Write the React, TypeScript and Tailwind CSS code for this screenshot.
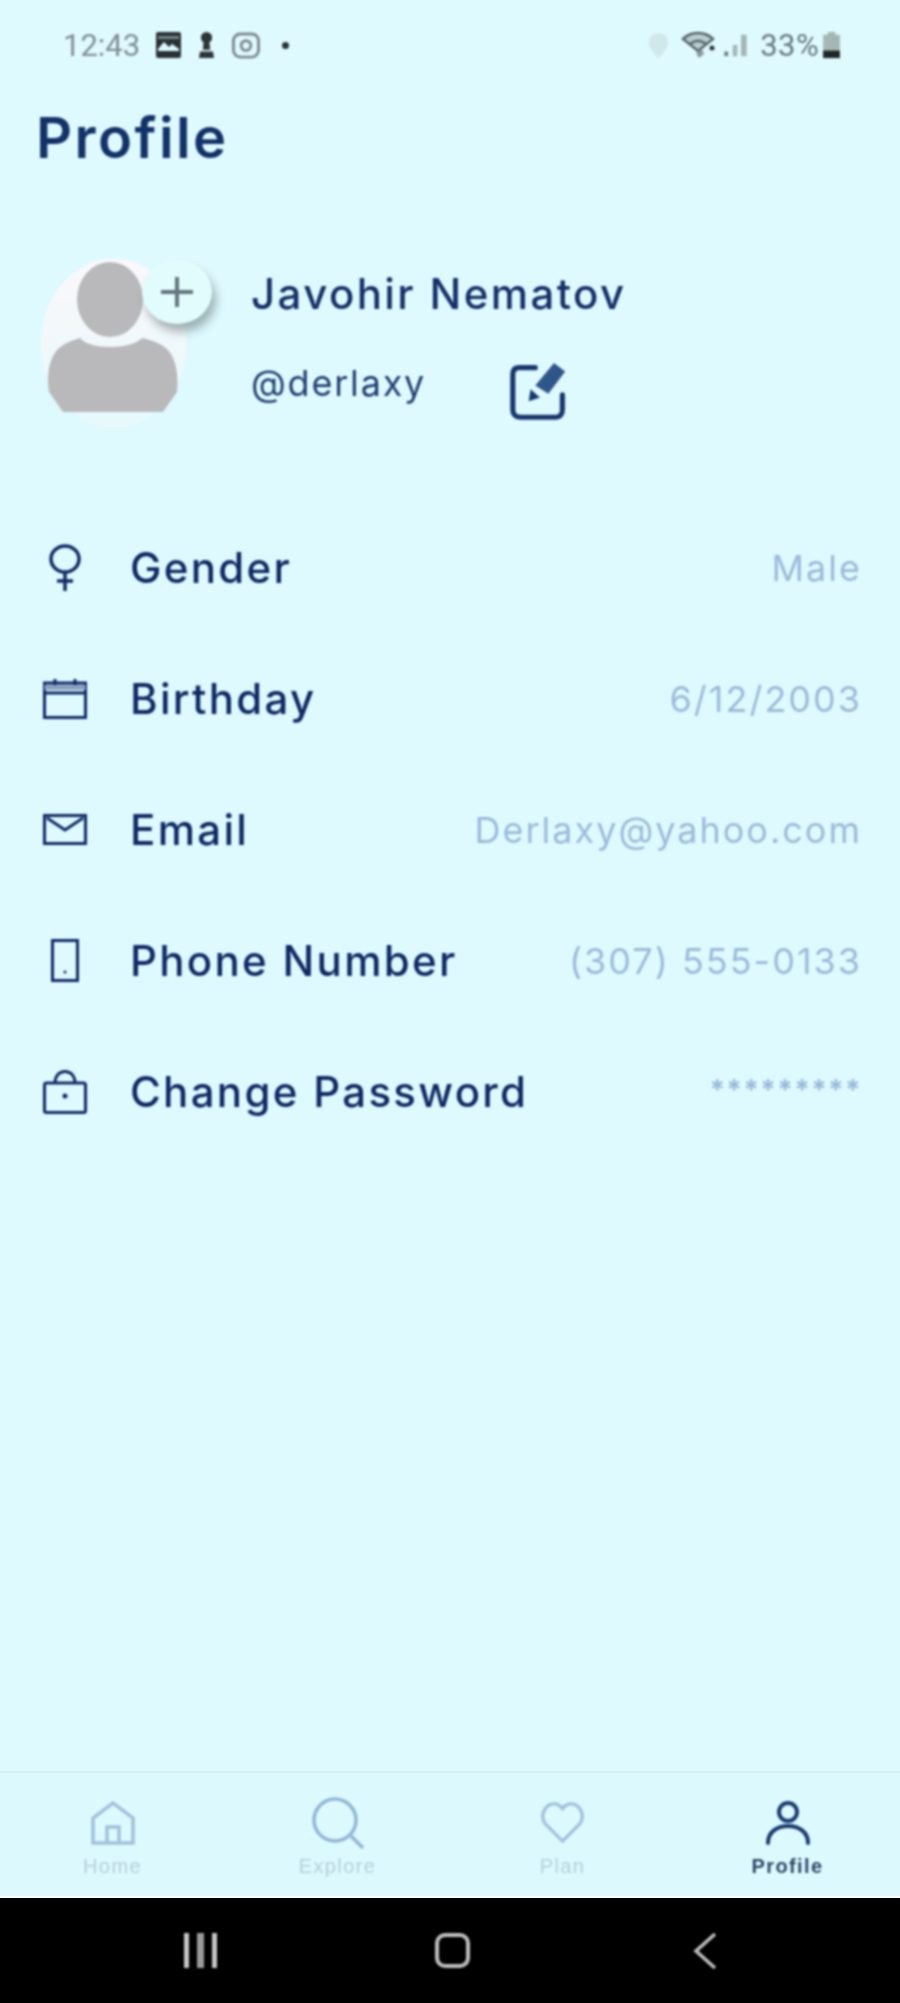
import type { ReactNode } from 'react';

const GenderIcon = () => (
  <svg width="32" height="47" viewBox="0 0 32 47" fill="none" stroke="#102a66" strokeWidth="3.5">
    <ellipse cx="16" cy="15" rx="14" ry="13" />
    <path d="M16 28v19M8 37h16" />
  </svg>
);

const CalendarIcon = () => (
  <svg width="44" height="40" viewBox="0 0 44 40" fill="none" stroke="#102a66" strokeWidth="3">
    <rect x="1.5" y="4" width="41" height="34.5" />
    <path d="M1.5 14h41" />
    <path d="M1.5 8.5h41" stroke="#8c9fc0" strokeWidth="5" />
    <path d="M12 0v6M32 0v6" />
  </svg>
);

const MailIcon = () => (
  <svg width="44" height="31" viewBox="0 0 44 31" fill="none" stroke="#102a66" strokeWidth="3">
    <rect x="1.5" y="1.5" width="41" height="28" />
    <path d="M4 4l18 12L40 4" />
  </svg>
);

const PhoneIcon = () => (
  <svg width="28" height="43" viewBox="0 0 28 43" fill="none" stroke="#102a66" strokeWidth="3">
    <rect x="1.5" y="1.5" width="25" height="40" />
    <circle cx="14" cy="33" r="1.5" fill="#102a66" stroke="none" />
  </svg>
);

const LockIcon = () => (
  <svg width="44" height="44" viewBox="0 0 44 44" fill="none" stroke="#102a66" strokeWidth="3">
    <rect x="1.5" y="13" width="41" height="29.5" rx="2" />
    <path d="M12 13c0-7 4-11.500 10-11.500S32 6 32 13" />
    <circle cx="22" cy="26" r="2.500" fill="#102a66" stroke="none" />
  </svg>
);

const Row = ({ icon, label, value }: { icon: ReactNode; label: string; value: ReactNode }) => (
  <div className="flex h-[131px] items-center pl-[32px] pr-[38px]">
    <div className="flex w-[66px] justify-center">{icon}</div>
    <span className="ml-[32px] text-[42px] font-medium tracking-[2.3px] text-[#0f2864]">{label}</span>
    <span className="ml-auto text-[36px] tracking-[2px] text-[#9bb9da]">{value}</span>
  </div>
);

const NavItem = ({ icon, label, active }: { icon: ReactNode; label: string; active?: boolean }) => (
  <div className="flex flex-col items-center">
    <div className="flex h-[56px] items-center">{icon}</div>
    <span
      className={
        active
          ? "font-['Liberation_Sans',sans-serif] text-[20px] font-bold tracking-[1.4px] text-[#2f4568]"
          : "font-['Liberation_Sans',sans-serif] text-[20px] tracking-[1.4px] text-[#b6ced9]"
      }
    >
      {label}
    </span>
  </div>
);

export default function App() {
  return (
    <div className="flex h-[2003px] w-[900px] flex-col overflow-hidden bg-[#dffaff] font-['Inter',sans-serif]">
      {/* status bar */}
      <div className="flex h-[72px] items-center pl-[63px] pr-[59px] pt-[18px] font-['Roboto',sans-serif] text-[#7f8f93] blur-[0.8px]">
        <span className="text-[31px] leading-none">12:43</span>
        <svg className="ml-[16px]" width="25" height="26" viewBox="0 0 25 26">
          <rect x="0" y="0" width="25" height="26" rx="2" fill="#2a3236" />
          <path d="M2 17l6-7 5 5 3-3 7 5v2H2z" fill="#dffaff" />
          <rect x="2" y="4" width="21" height="3" fill="#dffaff" opacity="0.4" />
        </svg>
        <svg className="ml-[17px]" width="17" height="28" viewBox="0 0 18 30" fill="#2c3437">
          <circle cx="9" cy="7" r="6" />
          <path d="M6 11h6l1 9H5zM2 22h14l1 7H1z" />
        </svg>
        <svg className="ml-[16px]" width="30" height="27" viewBox="0 0 30 28" fill="none" stroke="#7d8b8f" strokeWidth="3">
          <rect x="2" y="2" width="26" height="24" rx="7" />
          <circle cx="15" cy="14" r="5" />
        </svg>
        <span className="ml-[21px] h-[7px] w-[7px] rounded-full bg-[#2a3236]" />
        <svg className="ml-auto" width="21" height="27" viewBox="0 0 22 28" fill="#cfe8ea">
          <path d="M11 1c6 0 10 4 10 10 0 6-6 12-10 16C7 23 1 17 1 11 1 5 5 1 11 1z" />
        </svg>
        <svg className="ml-[12px]" width="36" height="28" viewBox="0 0 36 28" fill="none">
          <path d="M2 8C10 0 24 0 32 8L17 20z" fill="#b9cbcd" stroke="#55686c" strokeWidth="2.500" />
          <path d="M9 13c5-4 11-4 16 0" stroke="#55686c" strokeWidth="2.500" />
          <path d="M15 22l6-4 2 5-5 4z" fill="#8a9a9c" />
          <circle cx="31" cy="17" r="2.500" fill="#2a3236" />
        </svg>
        <svg className="ml-[6px]" width="25" height="26" viewBox="0 0 26 28" fill="#a3b5b7">
          <rect x="1" y="21" width="4" height="5" fill="#6c7d80" />
          <rect x="10" y="14" width="5" height="12" />
          <rect x="19" y="3" width="6" height="23" />
        </svg>
        <span className="ml-[12px] text-[31px] leading-none tracking-[0.4px] text-[#68797d]">33%</span>
        <svg className="ml-[3px]" width="19" height="28" viewBox="0 0 20 30">
          <path d="M6 1h8v3h5v25H1V4h5z" fill="#a4b7b5" />
          <rect x="1" y="21" width="18" height="8" fill="#1e2628" />
        </svg>
      </div>

      {/* title */}
      <h1 className="ml-[36px] mt-[26px] text-[56px] font-semibold leading-[80px] tracking-[2.4px] text-[#123268] blur-[0.8px]">Profile</h1>

      {/* user block */}
      <div className="ml-[41px] mt-[81px] flex h-[169px] blur-[0.8px]">
        <div className="relative h-[169px] w-[145px] rounded-[50%] bg-gradient-to-b from-[#fbf8fb] to-[#e6f9fc]">
          <svg className="ml-[6px] mt-[3px]" width="131" height="150" viewBox="0 0 131 150" fill="#b9b9bb">
            <ellipse cx="63" cy="37.500" rx="33" ry="37.500" />
            <path d="M16 150L2 130C0 118 0 100 10 88c8-8 18-10 23-12 9 12 51 12 62 0 9 2 23 6 29 16 7 12 7 28 6 38l-14 20z" />
          </svg>
          <div className="absolute left-[101px] top-[1px] flex h-[64px] w-[70px] items-center justify-center rounded-[50%] bg-[#e2fbfd] shadow-[4px_8px_10px_rgba(70,90,90,0.45)]">
            <svg width="32" height="30" viewBox="0 0 32 30" stroke="#61767d" strokeWidth="4">
              <path d="M16 0v30M0 15h32" />
            </svg>
          </div>
        </div>
        <div className="ml-[65px] flex flex-col">
          <span className="mt-[10px] text-[42px] font-medium leading-[50px] tracking-[2.4px] text-[#152f68]">Javohir Nematov</span>
          <div className="mt-[39px] flex items-start">
            <span className="text-[36px] leading-[50px] tracking-[1.8px] text-[#1f3d70]">@derlaxy</span>
            <svg className="ml-[84px] mt-[5px]" width="58" height="58" viewBox="0 0 62 62" fill="none">
              <path d="M27 5H10C5 5 3 8 3 12v38c0 5 3 8 8 8h38c4 0 7-3 7-8V34" stroke="#17376d" strokeWidth="5.500" strokeLinecap="round" />
              <path d="M47 0l12 9-18 24-14-9z" fill="#2f5688" />
              <path d="M22 28l10 9-12 4z" fill="#17376d" />
            </svg>
          </div>
        </div>
      </div>

      {/* info rows */}
      <div className="mt-[74px] blur-[0.8px]">
        <Row icon={<GenderIcon />} label="Gender" value="Male" />
        <Row icon={<CalendarIcon />} label="Birthday" value="6/12/2003" />
        <Row icon={<MailIcon />} label="Email" value="Derlaxy@yahoo.com" />
        <Row icon={<PhoneIcon />} label="Phone Number" value="(307) 555-0133" />
        <Row
          icon={<LockIcon />}
          label="Change Password"
          value={<span className="relative top-[-5px] text-[28px] font-bold tracking-[1.3px]">*********</span>}
        />
      </div>

      {/* bottom nav */}
      <div className="mt-auto h-[125px] border-t-2 border-[#d7f2f6] bg-[#dcfafd] pt-[22px]">
        <div className="grid grid-cols-4 blur-[0.8px]">
          <NavItem
            label="Home"
            icon={
              <svg width="44" height="44" viewBox="0 0 44 44" fill="none" stroke="#a3c0dc" strokeWidth="3.500">
                <path d="M2 42V17L22 2l20 15v25z" />
                <path d="M16 42V26h12v16" />
              </svg>
            }
          />
          <NavItem
            label="Explore"
            icon={
              <svg width="54" height="54" viewBox="0 0 54 54" fill="none" stroke="#93b5d8" strokeWidth="3.500">
                <circle cx="24" cy="24" r="21" />
                <path d="M40 40l12 12" />
              </svg>
            }
          />
          <NavItem
            label="Plan"
            icon={
              <svg width="45" height="42" viewBox="0 0 46 44" fill="none" stroke="#a3c0dc" strokeWidth="3.500">
                <path d="M23 41L5 23C-2 13 6 2 14 2c5 0 7 2 9 5 2-3 4-5 9-5 8 0 16 11 9 21z" />
              </svg>
            }
          />
          <NavItem
            active
            label="Profile"
            icon={
              <svg width="46" height="44" viewBox="0 0 46 44" fill="none" stroke="#1a3a70" strokeWidth="4">
                <circle cx="23" cy="11" r="9" />
                <path d="M3 42c0-11 9-17 20-17s20 6 20 17" strokeLinecap="round" />
              </svg>
            }
          />
        </div>
      </div>
      <div className="h-[2px] bg-[#ffffff]" />

      {/* android nav bar */}
      <div className="h-[105px] bg-black">
        <div className="flex h-full items-center pl-[184px] blur-[0.8px]">
          <div className="flex w-[33px] justify-between">
            <span className="h-[35px] w-[5px] bg-[#c4c4c4]" />
            <span className="h-[35px] w-[7px] bg-[#9a9a9a]" />
            <span className="h-[35px] w-[5px] bg-[#c4c4c4]" />
          </div>
          <span className="ml-[218px] h-[35px] w-[35px] rounded-[10px] border-[4px] border-[#bdbdbd]" />
          <svg className="ml-[223px]" width="24" height="36" viewBox="0 0 24 36" fill="none" stroke="#bdbdbd" strokeWidth="3.500">
            <path d="M22 1L3 18l19 17" />
          </svg>
        </div>
      </div>
    </div>
  );
}
